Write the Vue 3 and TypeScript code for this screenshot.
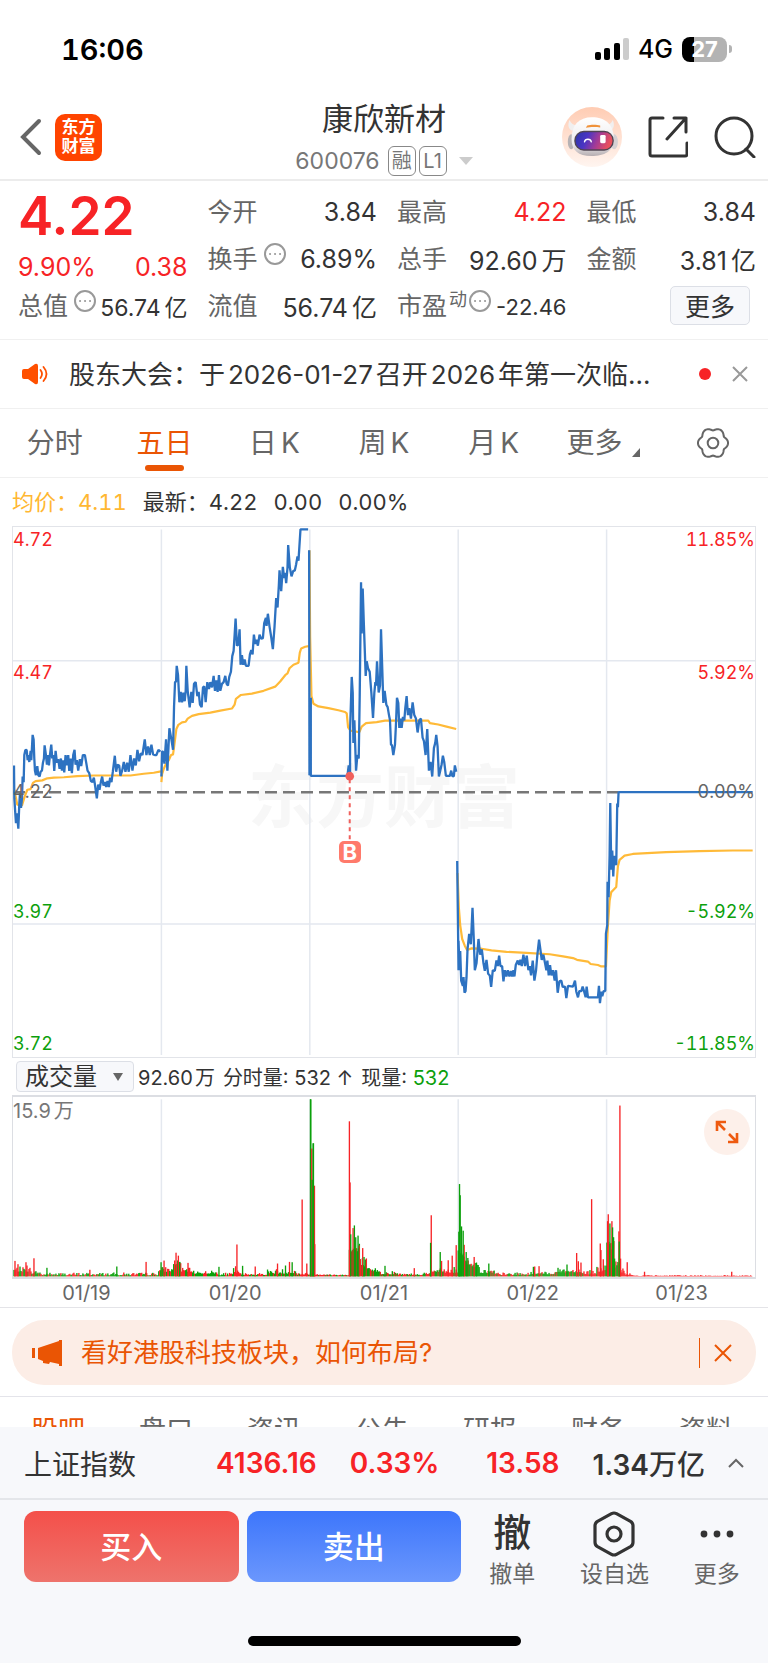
<script setup lang="ts">
import { ref } from 'vue'

type Tone = 'up' | 'down' | 'flat'
type Bar = { x: number; top: number; tone: 'up' | 'down' }

const periods = ['分时', '五日', '日K', '周K', '月K', '更多']
const activePeriod = ref('五日')
const sections = ['股吧', '盘口', '资讯', '公告', '研报', '财务', '资料']
const indicator = ref('成交量')
const dates = ['01/19', '01/20', '01/21', '01/22', '01/23']

const scale: { price: string; pct: string; tone: Tone }[] = [
  { price: '4.72', pct: '11.85%', tone: 'up' },
  { price: '4.47', pct: '5.92%', tone: 'up' },
  { price: '4.22', pct: '0.00%', tone: 'flat' },
  { price: '3.97', pct: '-5.92%', tone: 'down' },
  { price: '3.72', pct: '-11.85%', tone: 'down' },
]

const priceLines: string[] = [
  '40,720 41,815 44,860 46,886 49,858 53,902 56,830 58,800 61,842 64,815 66,752 69,768 71,690 74,676 78,675 81,705 83,690 86,710 90,678 92,705 96,632 99,645 101,700 103,735 106,748 110,722 113,748 117,752 120,738 124,735 127,712 130,700 132,662 136,690 139,718 142,690 145,720 148,690 152,660 155,700 158,690 161,736 165,678 169,712 173,702 177,730 181,700 184,735 188,705 191,740 195,690 199,720 203,690 206,736 210,700 214,742 218,690 222,675 225,718 229,705 233,735 238,702 242,722 247,690 253,690 257,712 261,735 266,742 271,765 276,768 280,755 284,780 289,815 293,775 297,790 301,768 305,752 309,778 313,768 317,782 321,765 325,782 329,755 333,768 337,738 343,692 347,738 351,718 356,720 360,750 365,735 370,710 375,738 380,712 385,738 390,690 396,735 401,700 406,720 411,675 416,708 421,685 426,690 433,645 438,690 443,665 448,690 453,660 458,688 463,690 468,690 474,675 480,680',
  '483,752 485,680 488,680 492,715 497,645 501,735 507,613 513,645 518,675 521,550 524,480 527,478 529,433 533,460 537,538 541,508 545,538 549,510 553,535 556,505 558,433 562,505 568,553 573,508 577,540 581,485 586,480 591,520 595,508 599,545 604,552 608,495 612,492 616,538 621,480 626,500 630,480 635,495 640,462 644,505 648,475 652,508 656,460 660,505 665,485 670,480 675,462 679,485 683,490 687,465 692,450 696,405 700,390 703,345 706,297 710,375 714,372 718,328 721,430 725,402 729,430 733,415 737,433 745,433 749,400 753,388 757,400 761,343 765,370 769,358 773,375 778,343 783,355 788,353 792,310 797,295 799,318 803,283 808,320 813,350 818,385 823,320 828,238 832,265 836,200 838,158 843,218 848,148 852,180 855,165 858,195 862,150 864,85 869,150 874,175 879,160 884,158 888,140 892,118 895,130 898,85 901,40 924,40',
  '927,100 928,748 932,525 932,750 1042,750 1046,720 1050,740 1050,620 1055,465 1058,510 1060,655 1063,590 1068,735 1072,690 1076,700 1079,520 1083,192 1085,340 1088,210 1091,300 1097,462 1100,420 1104,440 1109,450 1114,510 1119,583 1123,510 1126,480 1128,490 1131,420 1136,510 1140,490 1143,328 1150,540 1154,505 1159,545 1163,552 1167,575 1170,590 1173,660 1176,662 1180,690 1185,660 1188,600 1191,525 1195,540 1198,612 1202,585 1205,612 1209,580 1213,590 1216,555 1220,520 1224,575 1228,555 1233,585 1238,538 1243,575 1248,585 1253,625 1258,590 1263,585 1268,640 1272,650 1277,690 1282,615 1287,735 1292,710 1297,752 1302,670 1306,655 1309,632 1313,665 1317,752 1321,735 1325,718 1329,692 1333,710 1338,750 1350,750 1354,735 1358,752 1362,750 1365,720 1369,738',
  '1372,995 1376,1310 1376,1225 1379,1310 1381,1255 1384,1340 1389,1355 1391,1330 1394,1375 1397,1370 1400,1330 1403,1250 1408,1205 1413,1235 1418,1130 1422,1225 1425,1310 1430,1290 1436,1220 1441,1265 1446,1250 1451,1290 1455,1312 1460,1280 1465,1320 1470,1325 1474,1358 1479,1310 1485,1312 1490,1282 1494,1298 1498,1268 1502,1298 1507,1298 1511,1342 1515,1310 1520,1328 1524,1310 1529,1328 1533,1312 1537,1328 1541,1310 1544,1328 1548,1295 1554,1282 1558,1295 1562,1280 1566,1298 1571,1265 1576,1298 1581,1268 1586,1310 1590,1298 1594,1325 1599,1282 1604,1340 1609,1310 1613,1265 1618,1222 1622,1250 1626,1280 1631,1265 1636,1290 1640,1310 1643,1282 1647,1325 1651,1295 1655,1325 1660,1310 1665,1340 1669,1310 1674,1375 1679,1342 1685,1340 1689,1358 1696,1357 1700,1390 1705,1355 1720,1357 1726,1340 1730,1372 1735,1388 1739,1370 1745,1370 1749,1357 1753,1370 1758,1388 1761,1357 1765,1388 1795,1388 1798,1355 1801,1405 1805,1372 1808,1385 1812,1370 1817,1370 1819,1205 1823,1180 1824,1055 1827,1100 1830,980 1832,828 1835,1020 1838,965 1841,1040 1844,980 1848,1005 1850,1005 1853,830 1855,840 1857,797 2260,797',
]

const averageLines: string[] = [
  '41,790 50,833 64,835 72,810 80,790 90,788 97,770 105,765 125,763 140,757 160,755 190,754 230,751 280,749 340,749 390,749 430,744 460,741 482,737',
  '483,768 485,745 490,730 497,715 505,705 512,690 518,688 522,660 528,615 534,603 545,596 556,594 562,585 575,577 595,572 630,568 660,562 695,556 703,545 707,528 722,517 755,513 790,505 825,493 840,478 855,460 862,455 868,440 880,430 895,424 899,395 903,383 915,378 926,376',
  '928,100 930,350 934,520 940,542 955,550 985,555 1015,561 1035,566 1040,570 1044,610 1052,620 1078,624 1085,608 1098,598 1130,595 1155,591 1285,591 1290,598 1315,602 1340,608 1369,615',
  '1373,1030 1377,1130 1381,1180 1387,1220 1395,1240 1402,1252 1415,1247 1445,1248 1475,1253 1520,1257 1580,1260 1650,1264 1690,1270 1720,1275 1732,1280 1765,1285 1773,1292 1795,1295 1805,1299 1817,1299 1819,1300 1825,1180 1830,1110 1835,1085 1842,1078 1850,1070 1855,1010 1860,992 1875,980 1900,975 2000,970 2100,967 2200,965 2260,965',
]

const dayEdges = [483, 929, 1375, 1821]

/* Typical turnover along the time axis: [from, low, high, share of falling minutes] */
const envelope: [number, number, number, number][] = [
  [40, 14, 30, 0.5], [90, 8, 18, 0.6], [120, 3, 12, 0.5], [475, 14, 30, 0.6],
  [520, 36, 52, 0.5], [542, 14, 26, 0.6], [575, 8, 18, 0.7], [650, 3, 11, 0.4],
  [698, 10, 34, 0.2], [718, 4, 11, 0.4], [800, 8, 24, 0.7], [890, 5, 12, 0.3],
  [945, 4, 12, 0.1], [975, 3, 7, 0.3], [1046, 70, 110, 0.6], [1080, 30, 60, 0.7],
  [1100, 14, 26, 0.8], [1140, 6, 18, 0.6], [1195, 4, 10, 0.6], [1270, 7, 13, 0.7],
  [1296, 14, 24, 0.6], [1322, 10, 30, 0.4], [1375, 60, 110, 1], [1396, 36, 56, 0.8],
  [1416, 28, 42, 0.9], [1440, 10, 22, 0.8], [1485, 4, 12, 0.5], [1590, 6, 14, 0.6],
  [1665, 12, 26, 0.7], [1745, 6, 24, 0.4], [1792, 14, 34, 0.3], [1822, 80, 120, 0.6],
  [1844, 26, 60, 0.7], [1864, 12, 30, 0.1], [1875, 4, 10, 0.1], [1900, 1, 4, 0],
]

const spikes: [number, number, 0 | 1][] = [
  [43, 637, 1], [52, 647, 1], [76, 641, 1], [79, 651, 1], [100, 629, 1], [139, 658, 0], [268, 664, 1],
  [349, 654, 0], [437, 640, 1], [482, 641, 0], [491, 636, 1], [527, 612, 1], [534, 621, 1], [538, 640, 0],
  [563, 643, 1], [656, 655, 0], [710, 587, 1], [727, 652, 0], [765, 654, 1], [832, 645, 1], [856, 651, 0],
  [868, 640, 1], [876, 641, 0], [906, 450, 1], [920, 645, 1], [943, 408, 1], [944, 586, 1], [931, 145, 0],
  [932, 145, 0], [935, 295, 1], [936, 390, 0], [939, 279, 0], [940, 279, 0], [1050, 398, 1], [1048, 212, 1],
  [1052, 556, 0], [1059, 537, 1], [1063, 529, 0], [1067, 565, 0], [1077, 590, 1], [1074, 560, 0],
  [1088, 598, 1], [1092, 625, 0], [1155, 652, 0], [1243, 659, 1], [1294, 498, 1], [1292, 582, 0],
  [1325, 637, 1], [1321, 610, 0], [1345, 635, 1], [1357, 621, 1], [1369, 589, 1], [1377, 548, 0],
  [1393, 588, 1], [1379, 403, 0], [1381, 437, 0], [1385, 532, 0], [1390, 545, 0], [1399, 610, 0],
  [1404, 628, 0], [1423, 625, 1], [1430, 642, 0], [1467, 645, 0], [1601, 655, 0], [1605, 654, 1],
  [1618, 653, 1], [1702, 648, 0], [1731, 613, 1], [1736, 638, 1], [1744, 642, 1], [1776, 449, 1],
  [1802, 584, 1], [1804, 604, 1], [1811, 632, 1], [1824, 516, 1], [1826, 495, 1], [1837, 516, 1],
  [1831, 523, 0], [1839, 535, 0], [1842, 565, 0], [1845, 630, 0], [1858, 547, 1], [1861, 164, 1],
  [1859, 578, 0], [1863, 630, 1], [1883, 641, 1], [1935, 670, 1], [2197, 670, 1],
]

const baseline = 684

function buildBars(): Bar[] {
  const out: Bar[] = []
  let seed = 7
  const next = () => {
    seed = (seed * 1103515245 + 12345) % 2147483648
    return seed / 2147483648
  }
  let band = 0
  for (let x = 40; x < 2260; x += 3) {
    while (band + 1 < envelope.length && x >= envelope[band + 1][0]) band++
    const [, low, high, fall] = envelope[band]
    const r = next()
    const height = low + (high - low) * r * r
    out.push({ x, top: baseline - height, tone: next() < fall ? 'down' : 'up' })
  }
  for (const [x, top, up] of spikes) out.push({ x, top, tone: up ? 'up' : 'down' })
  return out
}

const bars = buildBars()

function lobedRing(radius: number, depth: number): string {
  const pts: string[] = []
  for (let i = 0; i < 120; i++) {
    const a = (i / 120) * Math.PI * 2
    const r = radius + depth * Math.sqrt(Math.cos(a * 3) ** 2 + 0.04)
    pts.push(`${(16 + r * Math.cos(a)).toFixed(2)} ${(16 + r * Math.sin(a)).toFixed(2)}`)
  }
  return `M${pts.join('L')}Z`
}

const gear = lobedRing(12, 3)
</script>

<template>
  <div class="page">
    <header class="status">
      <span class="clock">16:06</span>
      <div class="status-right">
        <svg class="signal" viewBox="0 0 34 24" aria-hidden="true">
          <rect x="0" y="15" width="6" height="8" rx="2" />
          <rect x="9" y="11" width="6" height="12" rx="2" />
          <rect x="19" y="6" width="6" height="17" rx="2" />
          <rect x="28" y="1" width="6" height="22" rx="2" fill="#ccc" />
        </svg>
        <span class="net">4G</span>
        <span class="battery"><span class="cell">27</span><span class="knob"></span></span>
      </div>
    </header>

    <nav class="nav">
      <div class="nav-left">
        <button class="plain" aria-label="返回">
          <svg width="22" height="38" viewBox="0 0 22 38" fill="none" stroke="#666" stroke-width="4"><path d="M19 3 3 19l16 16" stroke-linecap="round" /></svg>
        </button>
        <a class="logo" href="#"><span>东方</span><span>财富</span></a>
      </div>
      <div class="nav-title">
        <h1>康欣新材</h1>
        <div class="code">
          <span>600076</span>
          <span class="tags"><span class="tag">融</span><span class="tag">L1</span></span>
          <svg width="14" height="8" viewBox="0 0 14 8" fill="#ccc" aria-hidden="true"><path d="M0 0h14L7 8z" /></svg>
        </div>
      </div>
      <div class="nav-right">
        <button class="plain" aria-label="智能助手">
          <svg width="60" height="60" viewBox="0 0 176 176">
            <defs>
              <linearGradient id="halo" x1="0" y1="0" x2="0" y2="1"><stop offset="0" stop-color="#ffccb3" /><stop offset="1" stop-color="#fff5f0" /></linearGradient>
              <linearGradient id="visor" x1="0" y1="0" x2="1" y2="0.2"><stop offset="0" stop-color="#2c36a8" /><stop offset="0.35" stop-color="#4a35c4" /><stop offset="0.65" stop-color="#a13a98" /><stop offset="1" stop-color="#e8505e" /></linearGradient>
              <linearGradient id="shell" x1="0" y1="0" x2="0" y2="1"><stop offset="0" stop-color="#fff" /><stop offset="0.7" stop-color="#eceaec" /><stop offset="1" stop-color="#b5adb0" /></linearGradient>
            </defs>
            <circle cx="88" cy="88" r="88" fill="url(#halo)" />
            <path d="M22 38c-6 14-4 26 8 32l14-16c-10-1-18-6-22-16zM149 38c6 14 4 26-8 32l-14-16c10-1 18-6 22-16z" fill="#f1efef" />
            <ellipse cx="27" cy="102" rx="10" ry="22" fill="#b7b2b4" />
            <ellipse cx="153" cy="102" rx="11" ry="22" fill="#d5d1d3" />
            <path d="M88 30c38 0 64 20 64 64 0 36-28 50-66 50s-58-16-58-50c0-42 22-64 60-64z" fill="url(#shell)" />
            <path d="M74 54c10-3 28-3 38 0v6c-12-2-30-2-42 1z" fill="#f0923a" />
            <rect x="36" y="70" width="116" height="58" rx="28" fill="#504452" />
            <rect x="40" y="74" width="108" height="50" rx="24" fill="url(#visor)" />
            <path d="M66 102c2-10 18-10 20 0" fill="none" stroke="#fff" stroke-width="4" stroke-linecap="round" />
            <rect x="112" y="82" width="16" height="24" rx="4" fill="#fff" />
          </svg>
        </button>
        <button class="plain" aria-label="分享">
          <svg width="40" height="42" viewBox="0 0 40 42" fill="none" stroke="#333" stroke-width="3" stroke-linecap="round" stroke-linejoin="round"><path d="M15 2H4Q2 2 2 4v34q0 2 2 2h33q2 0 2-2V27M26 2h12v14M38 2 19 23" /></svg>
        </button>
        <button class="plain" aria-label="搜索">
          <svg width="42" height="42" viewBox="0 0 42 42" fill="none" stroke="#333" stroke-width="3" stroke-linecap="round"><circle cx="20" cy="20" r="18" /><path d="m32 33 8 8" /></svg>
        </button>
      </div>
    </nav>

    <section class="quote">
      <div class="last">
        <strong>4.22</strong>
        <div class="change"><span>9.90%</span><span>0.38</span></div>
      </div>
      <div class="item"><span class="label">今开</span><span class="value">3.84</span></div>
      <div class="item"><span class="label">最高</span><span class="value up">4.22</span></div>
      <div class="item"><span class="label">最低</span><span class="value">3.84</span></div>
      <div class="item">
        <span class="label">换手<svg class="hint" viewBox="0 0 22 22"><circle cx="11" cy="11" r="10" /><path d="M6 11h.1M11 11h.1M16 11h.1" /></svg></span>
        <span class="value">6.89%</span>
      </div>
      <div class="item"><span class="label">总手</span><span class="value">92.60<i>万</i></span></div>
      <div class="item"><span class="label">金额</span><span class="value">3.81<i>亿</i></span></div>
      <div class="item">
        <span class="label">总值<svg class="hint" viewBox="0 0 22 22"><circle cx="11" cy="11" r="10" /><path d="M6 11h.1M11 11h.1M16 11h.1" /></svg></span>
        <span class="value medium">56.74<i>亿</i></span>
      </div>
      <div class="item"><span class="label">流值</span><span class="value">56.74<i>亿</i></span></div>
      <div class="item">
        <span class="label">市盈<sup>动</sup><svg class="hint tight" viewBox="0 0 22 22"><circle cx="11" cy="11" r="10" /><path d="M6 11h.1M11 11h.1M16 11h.1" /></svg></span>
        <span class="value small">-22.46</span>
      </div>
      <div class="item end"><button class="more">更多</button></div>
    </section>

    <section class="notice">
      <svg width="26" height="22" viewBox="0 0 26 22" fill="#ff5000" aria-hidden="true">
        <path d="M2 6h4l7-5q3-1 3 2v16q0 3-3 2l-7-5H2q-2 0-2-2V8q0-2 2-2z" />
        <path d="M18.500 7q3 4 0 8M21.500 4q6 7 0 14" fill="none" stroke="#ff5000" stroke-width="1.800" stroke-linecap="round" />
      </svg>
      <a href="#">股东大会：于<i>2026-01-27</i>召开<i>2026</i>年第一次临...</a>
      <span class="dot"></span>
      <button class="plain" aria-label="关闭公告">
        <svg width="16" height="16" viewBox="0 0 16 16" stroke="#999" stroke-width="2"><path d="m1 1 14 14M15 1 1 15" /></svg>
      </button>
    </section>

    <nav class="periods">
      <button v-for="p in periods" :key="p" :class="{ active: p === activePeriod }" @click="activePeriod = p">
        <span>{{ p.replace('K', '') }}<i v-if="p.includes('K')">K</i></span>
        <svg v-if="p === '更多'" width="8" height="9" viewBox="0 0 8 9" fill="#666"><path d="M8 0v9H0z" /></svg>
      </button>
      <button aria-label="图表设置">
        <svg width="32" height="32" viewBox="0 0 32 32" fill="none" stroke="#666" stroke-width="2"><path :d="gear" /><circle cx="16" cy="16" r="5.300" /></svg>
      </button>
    </nav>

    <main>
      <div class="readout">
        <span class="avg">均价：4.11</span><span>最新：4.22</span><span>0.00</span><span>0.00%</span>
      </div>

      <div class="chart">
        <div class="watermark" aria-hidden="true">东方财富</div>
        <svg class="plot" viewBox="37 33 2230 1527" preserveAspectRatio="none">
          <g class="grid">
            <path v-for="x in dayEdges" :key="x" :d="`M${x} 40V1554`" />
            <path d="M37 418H2267M37 1177H2267" />
          </g>
          <path class="reference" d="M37 797H1857" />
          <polyline v-for="(l, i) in averageLines" :key="'a' + i" class="average" :points="l" />
          <polyline v-for="(l, i) in priceLines" :key="'p' + i" class="price" :points="l" />
          <path class="marker-line" d="M1049 760V938" />
          <ellipse cx="1049" cy="751" rx="13" ry="12.500" fill="#f0605c" />
        </svg>
        <div class="labels">
          <div v-for="s in scale" :key="s.price" :class="s.tone"><span>{{ s.price }}</span><span>{{ s.pct }}</span></div>
        </div>
        <span class="buy-mark">B</span>
      </div>

      <div class="vol-head">
        <div class="picker">
          <select v-model="indicator" aria-label="指标"><option>成交量</option></select>
          <svg width="10" height="8" viewBox="0 0 10 8" fill="#666"><path d="M0 0h10L5 8z" /></svg>
        </div>
        <span>92.60<i>万</i></span><span>分时量: 532 ↑</span><span>现量: <b class="down">532</b></span>
      </div>

      <div class="volume">
        <svg viewBox="37 138 2230 548" preserveAspectRatio="none">
          <g class="grid"><path v-for="x in dayEdges" :key="x" :d="`M${x} 145V684`" /></g>
          <rect v-for="(b, i) in bars" :key="i" :class="b.tone" :x="b.x - 2" :y="b.top" width="4" :height="baseline - b.top" />
        </svg>
        <span class="vol-max">15.9<i>万</i></span>
        <button class="expand" aria-label="全屏">
          <svg width="24" height="24" viewBox="0 0 24 24" fill="none" stroke="#ee5a10" stroke-width="2.600"><path d="M11 2H2v9M2 2l8 8M22 13v9h-9M22 22l-8-8" /></svg>
        </button>
      </div>
      <div class="dates"><span v-for="d in dates" :key="d">{{ d }}</span></div>
    </main>

    <section class="promo-wrap">
      <div class="promo">
        <svg width="30" height="26" viewBox="0 0 30 26" fill="#ea5504" aria-hidden="true"><path d="M0 8h3v10H0zM6 8l21-7V0h3v26h-3v-2l-9-2-1 2-6-1v-2l-5-2z" /></svg>
        <a href="#">看好港股科技板块，如何布局?</a>
        <span class="bar"></span>
        <button class="plain" aria-label="关闭">
          <svg width="18" height="18" viewBox="0 0 18 18" stroke="#ea5504" stroke-width="2"><path d="m1 1 16 16M17 1 1 17" /></svg>
        </button>
      </div>
    </section>

    <nav class="sections">
      <a v-for="(s, i) in sections" :key="s" href="#" :class="{ active: i === 0 }">{{ s }}</a>
    </nav>

    <section class="index">
      <span class="index-name">上证指数</span>
      <b class="up">4136.16</b>
      <b class="up">0.33%</b>
      <b class="up points">13.58</b>
      <b>1.34<i>万亿</i></b>
      <button class="plain" aria-label="展开指数">
        <svg width="16" height="10" viewBox="0 0 16 10" fill="none" stroke="#666" stroke-width="2"><path d="m1 9 7-7 7 7" /></svg>
      </button>
    </section>

    <footer>
      <div class="actions">
        <div class="trade">
          <button class="buy">买入</button>
          <button class="sell">卖出</button>
        </div>
        <div class="tools">
          <button><span class="glyph">撤</span><span>撤单</span></button>
          <button>
            <svg width="42" height="46" viewBox="0 0 42 46" fill="none" stroke="#333" stroke-width="3.200" stroke-linejoin="round"><path d="M18.500 2.700q2.500-1.400 5 0l14 7.600q2.500 1.500 2.500 4.500v16.400q0 3-2.500 4.500l-14 7.600q-2.500 1.400-5 0l-14-7.600Q2 34.200 2 31.200V14.800q0-3 2.500-4.500z" /><circle cx="21" cy="23" r="7" /></svg>
            <span>设自选</span>
          </button>
          <button>
            <svg width="42" height="46" viewBox="0 0 42 46" fill="#333"><circle cx="8" cy="23" r="3.400" /><circle cx="21" cy="23" r="3.400" /><circle cx="34" cy="23" r="3.400" /></svg>
            <span>更多</span>
          </button>
        </div>
      </div>
      <div class="home"></div>
    </footer>
  </div>
</template>

<style>
body {
  margin: 0;
  background: #fff;
}
</style>

<style scoped>
.page {
  font-family: Inter, "Noto Sans CJK SC", sans-serif;
  color: #333;
  background: #fff;
  min-height: 100vh;
  overflow: hidden;
}
* {
  box-sizing: border-box;
}
i {
  font-style: normal;
}
a {
  color: inherit;
  text-decoration: none;
}
svg {
  display: block;
  flex: none;
}
button {
  font: inherit;
  color: inherit;
  border: 0;
  background: none;
  padding: 0;
  cursor: pointer;
}
.up {
  color: #f72326;
}
.down {
  color: #0ca00c;
}
.flat {
  color: #666;
}
.clock,
.readout,
.labels {
  font-variant-numeric: tabular-nums;
}

.status {
  display: flex;
  justify-content: space-between;
  align-items: center;
  height: 98px;
  padding: 0 36px 0 61px;
  color: #000;
}
.clock {
  font-size: 29px;
  font-weight: 600;
}
.status-right {
  display: flex;
  align-items: center;
}
.signal {
  width: 34px;
  height: 24px;
}
.net {
  margin: 0 9px;
  font-size: 25px;
  font-weight: 500;
}
.battery {
  display: flex;
  align-items: center;
  gap: 2px;
}
.cell {
  width: 45px;
  height: 25px;
  border-radius: 8px;
  background: linear-gradient(90deg, #000 27%, #b3b3b3 27%);
  color: #fff;
  font-size: 22px;
  font-weight: 700;
  line-height: 25px;
  text-align: center;
}
.knob {
  width: 3px;
  height: 8px;
  border-radius: 0 4px 4px 0;
  background: #b3b3b3;
}

.nav {
  display: grid;
  grid-template-columns: 1fr auto 1fr;
  align-items: center;
  height: 83px;
  padding: 0 12px 7px;
  border-bottom: 2px solid #ececec;
}
.nav-left {
  display: flex;
  align-items: center;
  gap: 13px;
  padding-left: 8px;
}
.logo {
  display: flex;
  flex-direction: column;
  justify-content: center;
  width: 47px;
  height: 47px;
  border-radius: 10px;
  background: #ff4400;
  color: #fff;
  font-size: 17px;
  font-weight: 700;
  line-height: 19px;
  text-align: center;
}
.nav-title {
  display: flex;
  flex-direction: column;
  align-items: center;
}
h1 {
  margin: 0;
  font-size: 31px;
  font-weight: 400;
  line-height: 42px;
}
.code {
  display: flex;
  align-items: center;
  gap: 8px;
  margin-top: 6px;
  font-size: 23px;
  line-height: 30px;
  color: #777;
}
.tags {
  display: flex;
  gap: 3px;
  margin-right: 4px;
}
.tag {
  min-width: 28px;
  height: 30px;
  padding: 0 2px;
  border: 1px solid #888;
  border-radius: 6px;
  font-size: 20px;
  line-height: 28px;
  text-align: center;
}
.nav-right {
  display: flex;
  align-items: center;
  justify-content: flex-end;
  gap: 26px;
}

.quote {
  display: grid;
  grid-template-columns: repeat(4, minmax(0, 1fr));
  grid-auto-rows: 47px;
  column-gap: 20px;
  padding: 7px 12px 10px 18px;
  border-bottom: 1px solid #f0f0f0;
  font-size: 25px;
}
.last {
  grid-row: span 2;
  color: #f72326;
}
.last strong {
  display: block;
  font-size: 53px;
  font-weight: 600;
  line-height: 57px;
}
.change {
  display: flex;
  justify-content: space-between;
  line-height: 44px;
}
.item {
  display: flex;
  align-items: center;
  justify-content: space-between;
  white-space: nowrap;
}
.item.end {
  justify-content: flex-end;
  padding-right: 6px;
}
.label {
  display: flex;
  color: #666;
  line-height: 32px;
}
.label sup {
  font-size: 18px;
  line-height: 20px;
  margin-left: 2px;
  vertical-align: baseline;
}
.hint {
  width: 22px;
  height: 22px;
  margin-left: 6px;
  fill: none;
  stroke: #999;
  stroke-width: 2;
  stroke-linecap: round;
}
.hint.tight {
  margin-left: 2px;
}
.value i {
  margin-left: 4px;
}
.small {
  font-size: 22px;
  line-height: 26px;
  padding-top: 3px;
}
.medium {
  font-size: 23px;
}
.more {
  width: 80px;
  height: 39px;
  padding-bottom: 3px;
  border: 1px solid #dcdfe6;
  border-radius: 5px;
  background: #f7f8fb;
}

.notice {
  display: flex;
  align-items: center;
  height: 69px;
  padding: 0 20px 0 22px;
  border-bottom: 1px solid #f0f0f0;
}
.notice a {
  flex: 1;
  margin-left: 21px;
  padding-bottom: 4px;
  font-size: 26px;
  white-space: nowrap;
}
.notice i {
  margin: 0 3px;
}
.dot {
  width: 12px;
  height: 12px;
  border-radius: 50%;
  background: #f72326;
  margin-right: 21px;
}

.periods {
  display: grid;
  grid-template-columns: repeat(7, 1fr);
  height: 69px;
  border-bottom: 1px solid #f0f0f0;
  font-size: 28px;
  color: #666;
}
.periods button {
  position: relative;
  display: flex;
  align-items: center;
  justify-content: center;
}
.periods span {
  padding-bottom: 4px;
}
.periods i {
  margin-left: 4px;
}
.periods span + svg {
  margin: 18px 0 0 10px;
}
.periods .active {
  color: #ea5504;
}
.periods .active::after {
  content: "";
  position: absolute;
  bottom: 6px;
  width: 39px;
  height: 6px;
  border-radius: 3px;
  background: #ea5504;
}

main {
  padding: 0 12px;
  border-bottom: 1px solid #e4e4e8;
}
.readout {
  display: flex;
  gap: 16px;
  font-size: 22px;
  line-height: 48px;
  height: 48px;
}
.avg {
  color: #ffb732;
}
.chart {
  position: relative;
  height: 532px;
  border: 1px solid #e2e4e9;
}
.plot {
  position: relative;
  width: 100%;
  height: 100%;
}
.plot * {
  vector-effect: non-scaling-stroke;
}
.grid {
  stroke: #e4e8ef;
  stroke-width: 1.500;
}
.reference {
  stroke: #777;
  stroke-width: 2.500;
  stroke-dasharray: 12 6;
}
.price,
.average {
  fill: none;
  stroke: #2d72c1;
  stroke-width: 2.300;
  stroke-linejoin: bevel;
}
.average {
  stroke: #ffba38;
  stroke-width: 2.200;
}
.marker-line {
  stroke: #f0605c;
  stroke-width: 2;
  stroke-dasharray: 4 4;
}
.watermark {
  position: absolute;
  inset: 0;
  display: flex;
  align-items: center;
  justify-content: center;
  font-size: 68px;
  font-weight: 700;
  color: #f7f7f7;
}
.labels {
  position: absolute;
  inset: 0;
  display: grid;
  grid-template-rows: repeat(4, 1fr);
  font-size: 18px;
  line-height: 26px;
}
.labels div {
  grid-column: 1;
  display: flex;
  justify-content: space-between;
}
.labels div:nth-child(1) {
  grid-row: 1;
}
.labels div:nth-child(2) {
  grid-row: 2;
}
.labels div:nth-child(3) {
  grid-row: 2 / 4;
  align-self: center;
}
.labels div:nth-child(4) {
  grid-row: 3;
  align-self: end;
}
.labels div:nth-child(5) {
  grid-row: 4;
  align-self: end;
}
.buy-mark {
  position: absolute;
  left: 45.400%;
  top: 61.400%;
  width: 22px;
  height: 22px;
  margin: -11px;
  border-radius: 5px;
  background: #ff7a6b;
  color: #fff;
  font-size: 22px;
  font-weight: 700;
  line-height: 22px;
  text-align: center;
}

.vol-head {
  display: flex;
  align-items: center;
  gap: 8px;
  height: 37px;
  padding-left: 4px;
  font-size: 20px;
  white-space: nowrap;
}
.vol-head i {
  margin-left: 2px;
}
.vol-head b {
  font-weight: 400;
}
.picker {
  display: flex;
  align-items: center;
  position: relative;
  margin-right: -4px;
}
.picker select {
  appearance: none;
  width: 118px;
  height: 31px;
  padding: 0 0 0 8px;
  border: 1px solid #dcdfe6;
  border-radius: 4px;
  background: #f7f8fb;
  color: #333;
  font: inherit;
  font-size: 24px;
  line-height: 28px;
}
.picker svg {
  position: absolute;
  right: 11px;
  pointer-events: none;
}

.volume {
  position: relative;
  height: 184px;
  border: 1px solid #dcdee3;
  border-width: 2px 1px;
}
.volume > svg {
  width: 100%;
  height: 100%;
}
.volume .grid path {
  vector-effect: non-scaling-stroke;
}
rect.up {
  fill: #f72326;
}
rect.down {
  fill: #0ca00c;
}
.vol-max {
  position: absolute;
  left: 0;
  top: 2px;
  font-size: 20px;
  line-height: 24px;
  color: #777;
}
.vol-max i {
  margin-left: 3px;
}
.expand {
  position: absolute;
  right: 5px;
  top: 12px;
  display: grid;
  place-items: center;
  width: 46px;
  height: 46px;
  border-radius: 50%;
  background: #fdf0ea;
}
.dates {
  display: grid;
  grid-template-columns: repeat(5, 1fr);
  font-size: 20px;
  line-height: 28px;
  color: #666;
  text-align: center;
}

.promo-wrap {
  padding: 12px 12px 11px;
  border-bottom: 1px solid #e4e4ea;
}
.promo {
  display: flex;
  align-items: center;
  height: 65px;
  padding: 0 24px 0 20px;
  border-radius: 32px;
  background: #fcede6;
  color: #ea5504;
  font-size: 26px;
}
.promo a {
  flex: 1;
  margin-left: 19px;
  padding-bottom: 4px;
}
.bar {
  width: 1px;
  height: 30px;
  background: #ea5504;
  margin-right: 14px;
}

.sections {
  display: grid;
  grid-template-columns: repeat(7, 1fr);
  height: 30px;
  padding: 14px 8px 0 4px;
  overflow: hidden;
  font-size: 27px;
  line-height: 40px;
  text-align: center;
  color: #666;
}
.sections .active {
  color: #ea5504;
}

.index {
  display: flex;
  align-items: center;
  gap: 33px;
  height: 73px;
  padding: 0 24px;
  background: #f7f8fb;
  border-bottom: 2px solid #e4e6ea;
  font-size: 28px;
  white-space: nowrap;
}
.index-name {
  flex: 1;
}
.index b {
  font-weight: 600;
}
.index i {
  font-weight: 500;
}
.points {
  min-width: 87px;
  text-align: right;
}
.index .plain {
  margin-left: -10px;
}

footer {
  background: #f7f8fb;
  padding: 11px 0 18px;
}
.actions {
  display: flex;
  padding-left: 24px;
}
.trade {
  display: flex;
  flex: 437;
  gap: 8px;
}
.trade button {
  flex: 1;
  height: 71px;
  padding-bottom: 4px;
  border-radius: 12px;
  color: #fff;
  font-size: 31px;
  font-weight: 500;
}
.buy {
  background: linear-gradient(#f4504a, #ee736c);
}
.sell {
  background: linear-gradient(#3d76fb, #6b97fd);
}
.tools {
  display: grid;
  grid-template-columns: repeat(3, 1fr);
  flex: 307;
}
.tools button {
  display: flex;
  flex-direction: column;
  align-items: center;
  color: #666;
  font-size: 23px;
  line-height: 34px;
}
.glyph {
  height: 46px;
  font-size: 38px;
  font-weight: 500;
  line-height: 42px;
  color: #333;
}
.home {
  width: 273px;
  height: 10px;
  margin: 45px auto 0;
  border-radius: 5px;
  background: #000;
}
</style>
